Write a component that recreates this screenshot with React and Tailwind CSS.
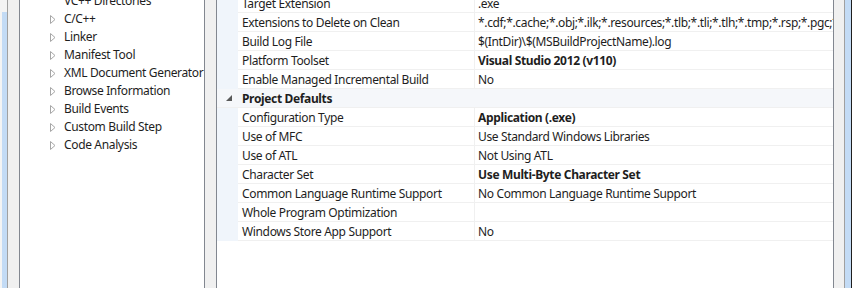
import React from "react";

const treeItems = [
  { label: "VC++ Directories", arrow: false },
  { label: "C/C++", arrow: true },
  { label: "Linker", arrow: true },
  { label: "Manifest Tool", arrow: true },
  { label: "XML Document Generator", arrow: true },
  { label: "Browse Information", arrow: true },
  { label: "Build Events", arrow: true },
  { label: "Custom Build Step", arrow: true },
  { label: "Code Analysis", arrow: true },
];

const rows = [
  { k: "Target Extension", v: ".exe" },
  { k: "Extensions to Delete on Clean", v: "*.cdf;*.cache;*.obj;*.ilk;*.resources;*.tlb;*.tli;*.tlh;*.tmp;*.rsp;*.pgc;*.pgd;*.meta;$(TargetPath)" },
  { k: "Build Log File", v: "$(IntDir)\\$(MSBuildProjectName).log" },
  { k: "Platform Toolset", v: "Visual Studio 2012 (v110)", b: true },
  { k: "Enable Managed Incremental Build", v: "No" },
  { cat: "Project Defaults" },
  { k: "Configuration Type", v: "Application (.exe)", b: true },
  { k: "Use of MFC", v: "Use Standard Windows Libraries" },
  { k: "Use of ATL", v: "Not Using ATL" },
  { k: "Character Set", v: "Use Multi-Byte Character Set", b: true },
  { k: "Common Language Runtime Support", v: "No Common Language Runtime Support" },
  { k: "Whole Program Optimization", v: "" },
  { k: "Windows Store App Support", v: "No" },
];

function TreeArrow() {
  return (
    <svg width="6" height="9" viewBox="0 0 6 9" className="shrink-0">
      <path d="M0.5 0.5 L5 4.5 L0.5 8.5 Z" fill="white" stroke="#a6a6a6" strokeWidth="1" />
    </svg>
  );
}

function CatArrow() {
  return (
    <svg width="6" height="6" viewBox="0 0 6 6">
      <path d="M6 0 L6 6 L0 6 Z" fill="#595959" />
    </svg>
  );
}

export default function App() {
  return (
    <div
      className="w-[852px] h-[288px] overflow-hidden flex bg-[#f0f0f0] text-[12px] tracking-[-0.35px] text-[#1e1e1e]"
      style={{ fontFamily: '"Noto Sans", "Liberation Sans", sans-serif' }}
    >
      {/* far-left strip */}
      <div className="w-[2px] bg-[#f4f4f4]" />
      <div className="w-[5px] flex flex-col">
        <div className="h-[12px] bg-[#f4f4f4]" />
        <div className="flex-1 bg-[#c3dbf5]" />
      </div>
      <div className="w-[1px] bg-[#a0a0a0]" />
      <div className="w-[11px] bg-[#f0f0f0]" />
      {/* tree panel */}
      <div className="w-[186px] border-x border-[#828790] bg-white overflow-hidden">
        <div className="-mt-[8px] flex flex-col">
          {treeItems.map((t) => (
            <div key={t.label} className="h-[18px] flex items-center whitespace-nowrap">
              <div className="w-[44px] shrink-0 flex justify-end pr-[8px]">
                {t.arrow && <TreeArrow />}
              </div>
              <span className="leading-[18px]">{t.label}</span>
            </div>
          ))}
        </div>
      </div>
      <div className="w-[11px] bg-[#f0f0f0]" />
      {/* property grid */}
      <div className="w-[618px] border-x border-[#828790] bg-white overflow-hidden">
        <div className="-mt-[6px] flex flex-col">
          {rows.map((r, i) =>
            r.cat ? (
              <div key={i} className="h-[19px] flex bg-[#f5f7fa] border-b border-[#f0f0f0]">
                <div className="w-[21px] shrink-0 flex items-center justify-center pl-[2px]">
                  <CatArrow />
                </div>
                <div className="pl-[4px] pt-[1px] font-bold leading-[18px] whitespace-nowrap">{r.cat}</div>
              </div>
            ) : (
              <div key={i} className="h-[19px] flex">
                <div className="w-[21px] shrink-0 bg-[#f0f5fb]" />
                <div className="flex-1 flex border-b border-[#f0f0f0] min-w-0">
                  <div className="w-[237px] shrink-0 border-r border-[#f0f0f0] pl-[4px] pt-[1px] leading-[17px] whitespace-nowrap overflow-hidden">
                    {r.k}
                  </div>
                  <div className={`flex-1 min-w-0 pl-[3px] pt-[1px] leading-[17px] whitespace-nowrap overflow-hidden ${r.b ? "font-bold" : ""}`}>
                    {r.v}
                  </div>
                </div>
              </div>
            )
          )}
        </div>
      </div>
      <div className="w-[10px] bg-[#f0f0f0]" />
      <div className="w-[1px] bg-[#a0a0a0]" />
      <div className="w-[6px] bg-[#c3dbf5]" />
      <div className="w-[1px] bg-[#1e1e1e]" />
    </div>
  );
}
